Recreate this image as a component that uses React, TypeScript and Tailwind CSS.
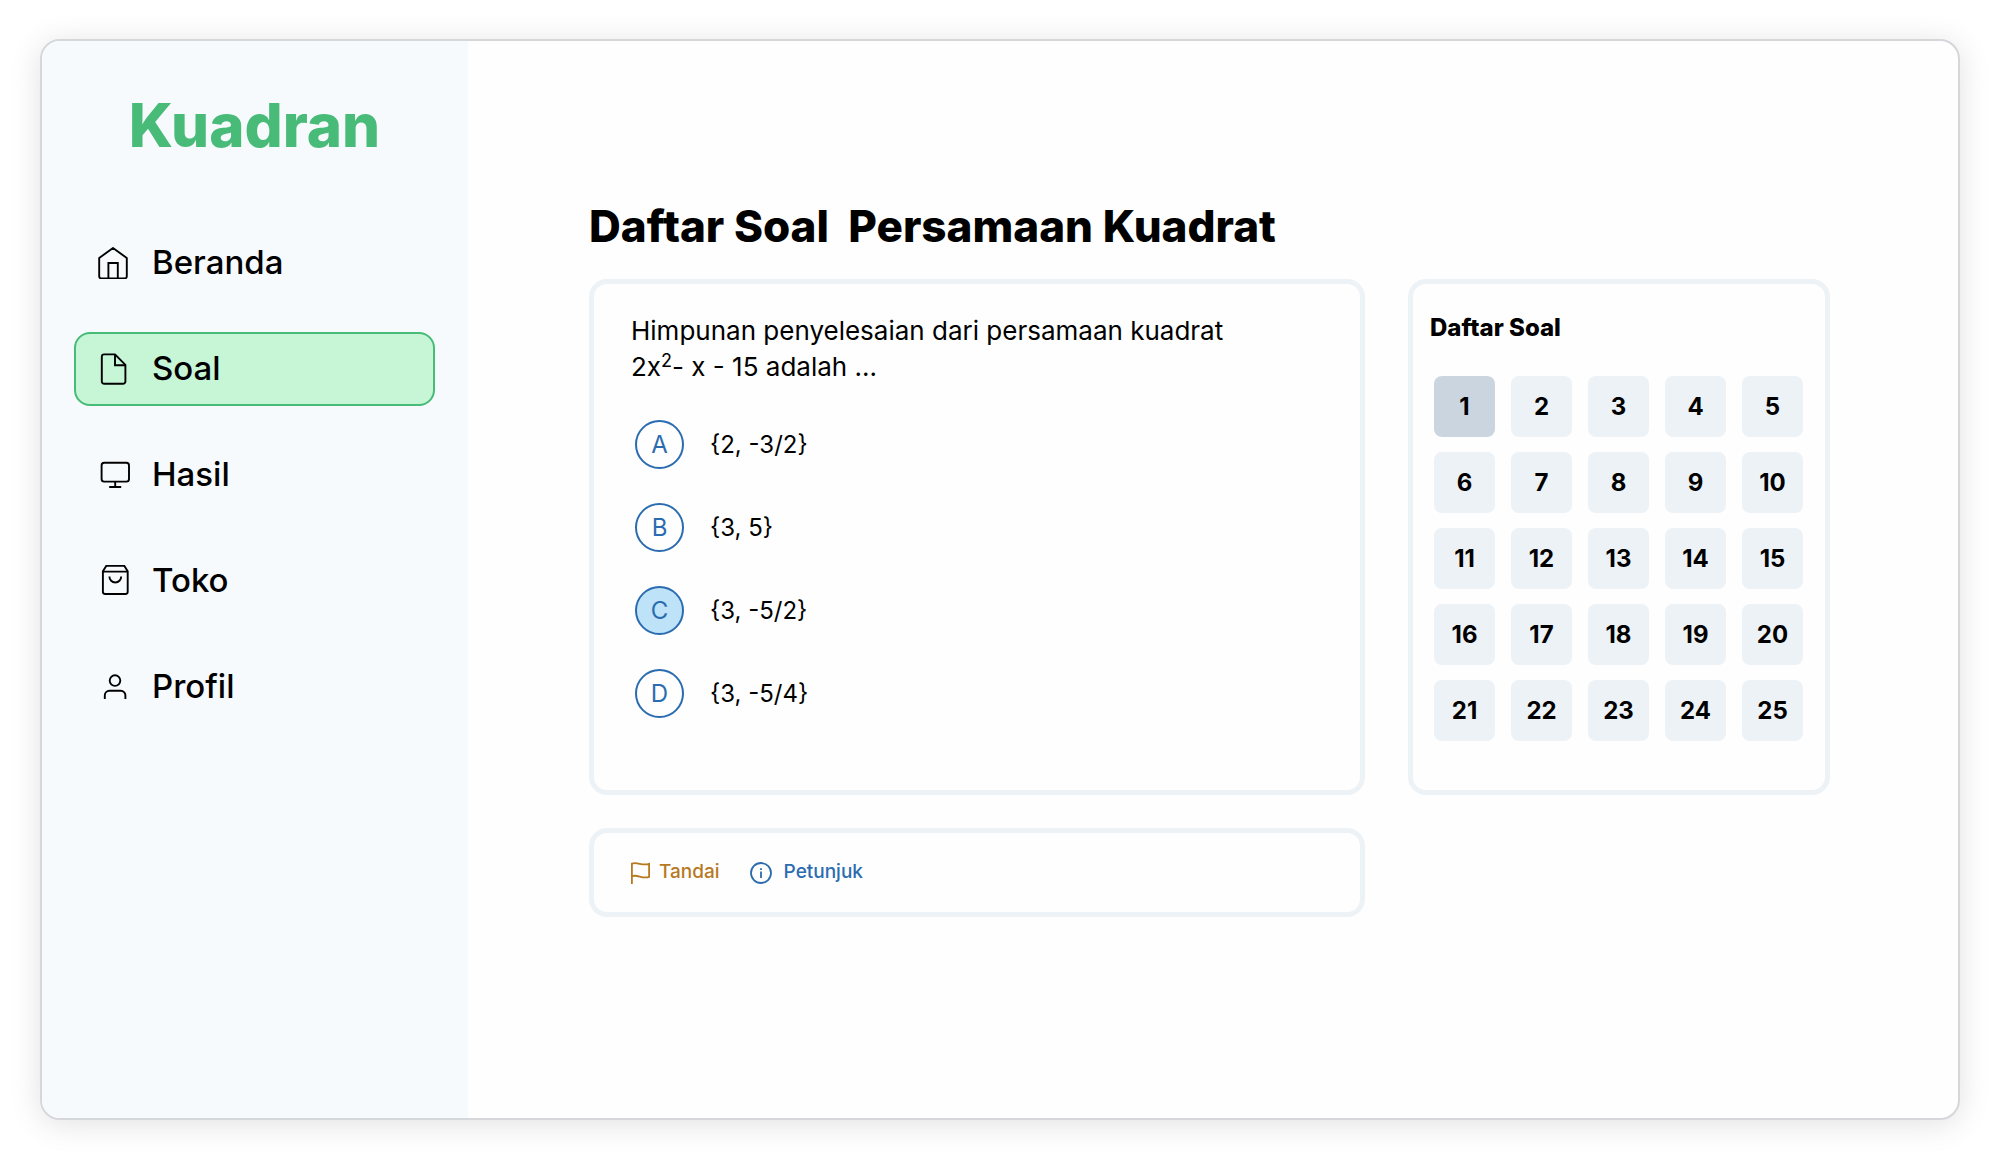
import { useState, type ReactNode } from "react";

function Icon({ children }: { children: ReactNode }) {
  return (
    <svg
      viewBox="0 0 32 32"
      className="size-8 shrink-0"
      fill="none"
      stroke="currentColor"
      strokeWidth="1.9"
      strokeLinejoin="round"
      aria-hidden="true"
    >
      {children}
    </svg>
  );
}

const menu: { label: string; icon: ReactNode }[] = [
  {
    label: "Beranda",
    icon: (
      <Icon>
        <path d="M1.2 11 15 1l13.8 10v18.2a2.2 2.2 0 0 1-2.2 2.2H3.4a2.2 2.2 0 0 1-2.2-2.2Z" />
        <path d="M10.4 31V16h9.4v15" strokeLinejoin="miter" />
      </Icon>
    ),
  },
  {
    label: "Soal",
    icon: (
      <Icon>
        <path d="M17 1.4H6.200a2.400 2.400 0 0 0-2.400 2.400v24.600a2.400 2.400 0 0 0 2.400 2.400h18.800a2.400 2.400 0 0 0 2.400-2.400V11.800Z" />
        <path d="M17 1.4v10.8h10.4" strokeLinejoin="miter" />
      </Icon>
    ),
  },
  {
    label: "Hasil",
    icon: (
      <Icon>
        <rect x="3.6" y="3.8" width="27.4" height="18.8" rx="2.6" />
        <path d="M17.2 22.6v5.4M11.2 28h12" />
      </Icon>
    ),
  },
  {
    label: "Toko",
    icon: (
      <Icon>
        <path d="M4.9 6.2 8.2 0.9h18.2l3.3 5.300v20.600a2.200 2.200 0 0 1-2.200 2.200H7.100a2.200 2.200 0 0 1-2.200-2.200Z" />
        <path d="M4.900 6.600h24.800M11.400 11.600a5.900 5.900 0 0 0 11.800 0" />
      </Icon>
    ),
  },
  {
    label: "Profil",
    icon: (
      <Icon>
        <circle cx="17" cy="9.6" r="5.3" />
        <path d="M6.8 28v-3.6a4.6 4.6 0 0 1 4.6-4.6h11.4a4.6 4.6 0 0 1 4.6 4.6V28" />
      </Icon>
    ),
  },
];

const options = [
  { key: "A", text: "{2, -3/2}" },
  { key: "B", text: "{3, 5}" },
  { key: "C", text: "{3, -5/2}" },
  { key: "D", text: "{3, -5/4}" },
];

const numbers = Array.from({ length: 25 }, (_, i) => i + 1);

function Sidebar() {
  return (
    <aside className="w-[426px] shrink-0 rounded-l-[18px] bg-[#f7fafc] pt-[53px] pr-[33px] pl-8">
      <p className="text-center text-[60px] leading-[62px] font-extrabold text-[#48bb78]">Kuadran</p>
      <nav className="mt-[70px] flex flex-col gap-8">
        {menu.map((item) => (
          <a
            key={item.label}
            href="#"
            aria-current={item.label === "Soal" ? "page" : undefined}
            className="flex h-[74px] items-center gap-[22px] rounded-2xl border-2 border-transparent px-[22px] text-[33px] font-medium aria-[current=page]:border-[#48bb78] aria-[current=page]:bg-[#c6f6d5]"
          >
            {item.icon}
            {item.label}
          </a>
        ))}
      </nav>
    </aside>
  );
}

function QuestionCard() {
  const [answer, setAnswer] = useState("C");
  return (
    <section className="rounded-[18px] border-[5px] border-[#edf2f7] px-[37px] pt-[29px] pb-[72px]">
      <fieldset>
        <legend className="text-[26px] leading-9">
          Himpunan penyelesaian dari persamaan kuadrat
          <br />
          2x<sup className="text-[18px]">2</sup>- x - 15 adalah ...
        </legend>
        <div className="mt-[35px] flex flex-col gap-[34px] pl-1">
          {options.map((o) => (
            <label key={o.key} className="relative flex items-center gap-[26px] text-2xl">
              <input
                type="radio"
                name="answer"
                className="peer sr-only"
                checked={answer === o.key}
                onChange={() => setAnswer(o.key)}
              />
              <span className="flex size-[49px] items-center justify-center rounded-full border-2 border-[#2b6cb0] text-[#2b6cb0] peer-checked:bg-[#bee3f8]">
                {o.key}
              </span>
              {o.text}
            </label>
          ))}
        </div>
      </fieldset>
    </section>
  );
}

function NumberCard() {
  const [current, setCurrent] = useState(1);
  return (
    <section className="rounded-[18px] border-[5px] border-[#edf2f7] px-[17px] pt-[26px]">
      <h2 className="text-2xl leading-9 font-extrabold">Daftar Soal</h2>
      <div className="mt-[30px] grid grid-cols-[repeat(5,61px)] gap-x-4 gap-y-[15px] pl-1">
        {numbers.map((n) => (
          <button
            key={n}
            type="button"
            aria-pressed={current === n}
            onClick={() => setCurrent(n)}
            className="h-[61px] rounded-lg bg-[#edf2f7] text-2xl font-bold aria-pressed:bg-[#cbd5e0]"
          >
            {n}
          </button>
        ))}
      </div>
    </section>
  );
}

function ActionBar() {
  return (
    <section className="flex h-[89px] items-center gap-[30px] rounded-[18px] border-[5px] border-[#edf2f7] px-[37px] text-[19px] font-medium">
      <button type="button" className="flex items-center gap-[9px] text-[#b7791f]">
        <svg viewBox="0 0 19 22" className="h-[22px] w-[19px]" fill="none" stroke="currentColor" strokeWidth="1.8" aria-hidden="true">
          <path d="M.9 22V1.6C6.4-.6 11.400 4.400 18.100 1.800V14.800C11.400 17.400 6.400 12 .9 14.200" />
        </svg>
        Tandai
      </button>
      <button type="button" className="flex items-center gap-3 text-[#2b6cb0]">
        <svg viewBox="0 0 22 22" className="size-[22px]" fill="none" stroke="currentColor" strokeWidth="1.8" aria-hidden="true">
          <circle cx="11" cy="11" r="10" />
          <path d="M11 9.600V16M11 6.200V8" />
        </svg>
        Petunjuk
      </button>
    </section>
  );
}

export default function App() {
  return (
    <div className="flex min-h-screen bg-white pt-[39px] pr-[39px] pb-[46px] pl-10 font-[Inter,sans-serif] text-black">
      <div className="flex flex-1 rounded-[20px] border-2 border-[#d5d7da] bg-[#fefefe] shadow-[0_4px_32px_rgba(0,0,0,0.12)]">
        <Sidebar />
        <main className="min-w-0 flex-1 pt-[154px] pr-32 pl-[121px]">
          <h1 className="text-[44px] leading-[62px] font-extrabold whitespace-pre">Daftar Soal  Persamaan Kuadrat</h1>
          <div className="mt-[22px] grid grid-cols-[minmax(0,776fr)_minmax(0,422fr)] gap-x-[43px] gap-y-[33px]">
            <QuestionCard />
            <NumberCard />
            <ActionBar />
          </div>
        </main>
      </div>
    </div>
  );
}
